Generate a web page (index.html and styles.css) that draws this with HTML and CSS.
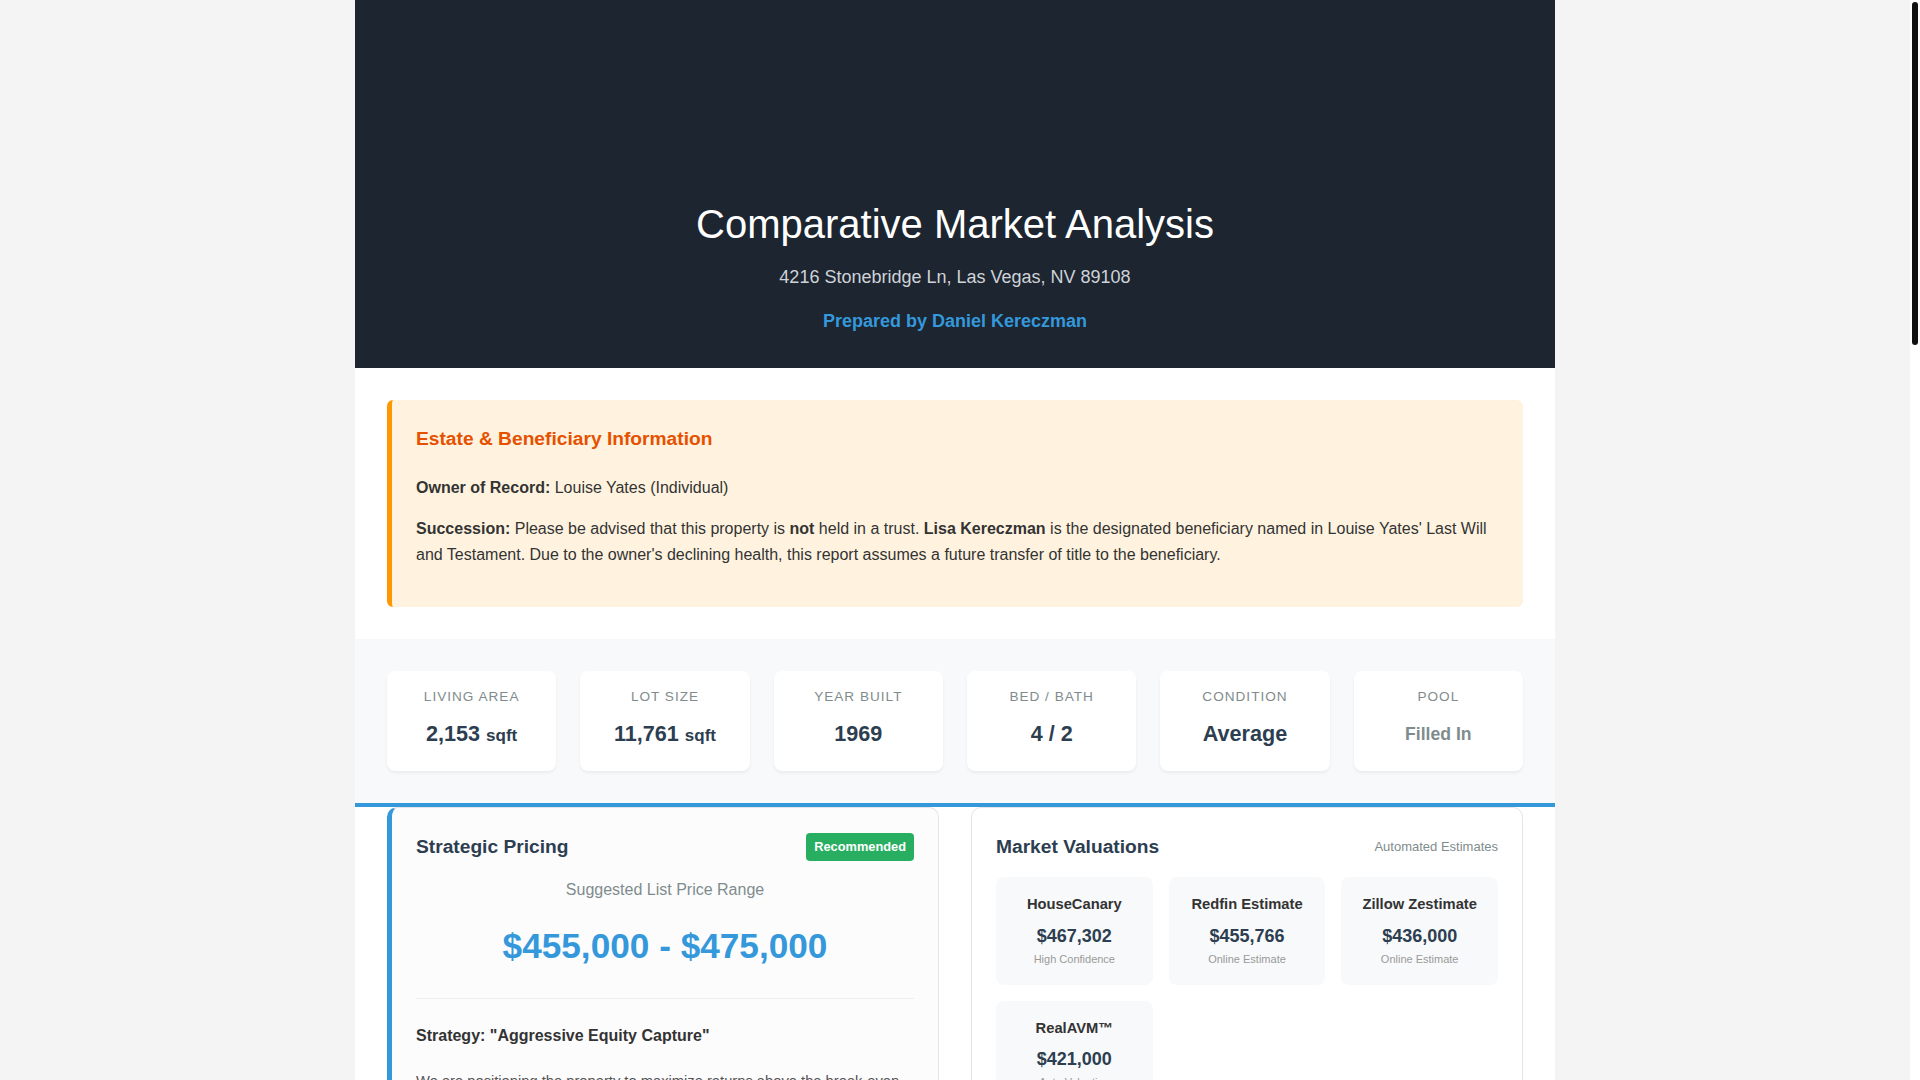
FILE: index.html
```html
<!DOCTYPE html>
<html lang="en">
<head>
<meta charset="utf-8">
<title>Comparative Market Analysis - 4216 Stonebridge Ln</title>
<link rel="stylesheet" href="styles.css">
</head>
<body>
<div class="scrollbar" aria-hidden="true"><div class="scrollbar-thumb"></div></div>
<div class="report">
  <header class="hero">
    <h1 class="hero-title">Comparative Market Analysis</h1>
    <p class="hero-address">4216 Stonebridge Ln, Las Vegas, NV 89108</p>
    <p class="hero-agent">Prepared by Daniel Kereczman</p>
  </header>

  <section class="section">
    <div class="estate-box">
      <h3 class="estate-title">Estate &amp; Beneficiary Information</h3>
      <p><strong>Owner of Record:</strong> Louise Yates (Individual)</p>
      <p><strong>Succession:</strong> Please be advised that this property is <strong>not</strong> held in a trust. <strong>Lisa Kereczman</strong> is the designated beneficiary named in Louise Yates' Last Will and Testament. Due to the owner's declining health, this report assumes a future transfer of title to the beneficiary.</p>
    </div>
  </section>

  <section class="stats">
    <div class="stat-card">
      <div class="stat-label">Living Area</div>
      <div class="stat-value">2,153 <span class="unit">sqft</span></div>
    </div>
    <div class="stat-card">
      <div class="stat-label">Lot Size</div>
      <div class="stat-value">11,761 <span class="unit">sqft</span></div>
    </div>
    <div class="stat-card">
      <div class="stat-label">Year Built</div>
      <div class="stat-value">1969</div>
    </div>
    <div class="stat-card">
      <div class="stat-label">Bed / Bath</div>
      <div class="stat-value">4 / 2</div>
    </div>
    <div class="stat-card">
      <div class="stat-label">Condition</div>
      <div class="stat-value">Average</div>
    </div>
    <div class="stat-card">
      <div class="stat-label">Pool</div>
      <div class="stat-value muted">Filled In</div>
    </div>
  </section>

  <section class="analysis">
    <div class="card pricing-card">
      <div class="card-header">
        <h3 class="card-title">Strategic Pricing</h3>
        <span class="badge">Recommended</span>
      </div>
      <div class="price-block">
        <div class="price-label">Suggested List Price Range</div>
        <div class="price-range">$455,000 - $475,000</div>
      </div>
      <h4 class="strategy-title">Strategy: "Aggressive Equity Capture"</h4>
      <p class="strategy-text">We are positioning the property to maximize returns above the break-even point while remaining competitive with recent closed sales in the Stonebridge area. The large 11,761 sqft lot and single-story layout appeal to buyers seeking space without HOA restrictions.</p>
      <ul class="strategy-list">
        <li>List at the upper end of the AVM range to leave room for negotiation.</li>
        <li>Highlight the oversized lot and RV parking potential.</li>
        <li>Disclose the filled-in pool with permits on file.</li>
        <li>Re-evaluate pricing after 21 days on market.</li>
      </ul>
      <p class="strategy-text">Should showing activity fall below expectations, a price adjustment toward $449,900 is recommended to capture buyers filtering at the $450,000 threshold.</p>
    </div>

    <div class="card">
      <div class="card-header">
        <h3 class="card-title">Market Valuations</h3>
        <span class="card-note">Automated Estimates</span>
      </div>
      <div class="avm-grid">
        <div class="avm-card">
          <div class="avm-name">HouseCanary</div>
          <div class="avm-value">$467,302</div>
          <div class="avm-sub">High Confidence</div>
        </div>
        <div class="avm-card">
          <div class="avm-name">Redfin Estimate</div>
          <div class="avm-value">$455,766</div>
          <div class="avm-sub">Online Estimate</div>
        </div>
        <div class="avm-card">
          <div class="avm-name">Zillow Zestimate</div>
          <div class="avm-value">$436,000</div>
          <div class="avm-sub">Online Estimate</div>
        </div>
        <div class="avm-card">
          <div class="avm-name">RealAVM™</div>
          <div class="avm-value">$421,000</div>
          <div class="avm-sub">Auto Valuation</div>
        </div>
      </div>
      <div class="avm-summary">
        <span>Average of Estimates</span>
        <strong>$445,017</strong>
      </div>
    </div>
  </section>

  <section class="section">
    <h2 class="section-title">Comparable Sales</h2>
    <table class="comps">
      <thead>
        <tr><th>Address</th><th>Sold Date</th><th>Sale Price</th><th>Sq Ft</th><th>$ / Sq Ft</th><th>Bed / Bath</th></tr>
      </thead>
      <tbody>
        <tr><td>4301 Rock Springs Dr</td><td>Aug 2024</td><td>$462,000</td><td>2,210</td><td>$209</td><td>4 / 2</td></tr>
        <tr><td>4125 Stonebridge Ln</td><td>Jul 2024</td><td>$449,500</td><td>2,080</td><td>$216</td><td>4 / 2</td></tr>
        <tr><td>6012 Alta Dr</td><td>Jun 2024</td><td>$471,000</td><td>2,290</td><td>$206</td><td>4 / 3</td></tr>
        <tr><td>4408 Kingsbury Ave</td><td>May 2024</td><td>$438,000</td><td>1,985</td><td>$221</td><td>3 / 2</td></tr>
        <tr><td>5920 Smoke Ranch Rd</td><td>Apr 2024</td><td>$455,000</td><td>2,140</td><td>$213</td><td>4 / 2</td></tr>
        <tr><td>4233 Coral Ridge Ct</td><td>Mar 2024</td><td>$444,900</td><td>2,050</td><td>$217</td><td>4 / 2</td></tr>
      </tbody>
    </table>
  </section>

  <section class="section section-alt">
    <h2 class="section-title">Estimated Net Proceeds</h2>
    <div class="proceeds">
      <div class="proceeds-row"><span>Projected Sale Price</span><strong>$465,000</strong></div>
      <div class="proceeds-row"><span>Commission (5%)</span><strong>-$23,250</strong></div>
      <div class="proceeds-row"><span>Title &amp; Escrow Fees</span><strong>-$3,900</strong></div>
      <div class="proceeds-row"><span>Transfer Tax</span><strong>-$2,372</strong></div>
      <div class="proceeds-row"><span>Repairs &amp; Preparation</span><strong>-$8,500</strong></div>
      <div class="proceeds-row total"><span>Estimated Net to Beneficiary</span><strong>$426,978</strong></div>
    </div>
  </section>

  <section class="section">
    <h2 class="section-title">Market Conditions</h2>
    <p class="body-text">The 89108 zip code continues to show balanced conditions with a median of 34 days on market. Inventory has risen modestly over the past quarter, giving buyers more choice, yet well-priced single-story homes on larger lots remain in demand.</p>
    <p class="body-text">Interest rate movements remain the primary factor influencing buyer affordability. Homes that are presented in clean, move-in condition are achieving 98 to 100 percent of list price, while properties requiring updates are trading closer to 95 percent.</p>
    <p class="body-text">Given the age of the home and its average condition, we recommend targeted improvements such as fresh interior paint, flooring in high-traffic areas, and landscaping cleanup to maximize first-impression appeal.</p>
  </section>

  <section class="section section-alt">
    <h2 class="section-title">Next Steps</h2>
    <ol class="steps">
      <li>Confirm probate or transfer-on-death requirements with the estate attorney.</li>
      <li>Schedule a pre-listing inspection to identify any major repairs.</li>
      <li>Complete recommended preparation and professional photography.</li>
      <li>Launch the listing with a coordinated marketing plan and open house.</li>
      <li>Review offers with the beneficiary and negotiate the best terms.</li>
    </ol>
  </section>

  <footer class="report-footer">
    <p>This analysis is not an appraisal and should not be relied upon as such. Values are estimates based on available market data.</p>
    <p>Daniel Kereczman &middot; Las Vegas, NV</p>
  </footer>
</div>
</body>
</html>
```

FILE: styles.css
```css
* {
  box-sizing: border-box;
}

html {
  background: #f4f4f4;
}

body {
  margin: 0;
  padding-right: 10px;
  background: #f4f4f4;
  font-family: "Liberation Sans", Arial, Helvetica, sans-serif;
  color: #333;
  line-height: 1.6;
}

/* Window scrollbar overlay */
.scrollbar {
  position: fixed;
  top: 0;
  right: 0;
  width: 10px;
  height: 100vh;
  background: #ffffff;
  padding: 2px;
  z-index: 10;
}

.scrollbar-thumb {
  width: 6px;
  height: 343px;
  background: #111111;
  border-radius: 3px;
}

.report {
  width: 1200px;
  margin: 0 auto;
  background: #ffffff;
}

/* Header */
.hero {
  background: #1c2530;
  color: #ffffff;
  text-align: center;
  padding: 200px 32px 32.4px;
}

.hero-title {
  margin: 0 0 14.8px;
  font-size: 40px;
  font-weight: 400;
  line-height: 48px;
}

.hero-address {
  margin: 0 0 15px;
  font-size: 18px;
  color: #cfd3d8;
}

.hero-agent {
  margin: 0;
  font-size: 18px;
  font-weight: 700;
  color: #3498db;
}

/* Sections */
.section {
  padding: 32px;
}

.section-alt {
  background: #f8f9fa;
}

.estate-box {
  background: #fff3e0;
  border-left: 5px solid #ff9800;
  border-radius: 6px;
  padding: 24px;
  font-size: 16px;
  color: #333;
}

.estate-title {
  margin: 0 0 20px;
  font-size: 19.2px;
  color: #e65100;
}

.estate-box p {
  margin: 0 0 16px;
}

/* Stats */
.stats {
  display: grid;
  grid-template-columns: repeat(6, 1fr);
  gap: 24px;
  padding: 32px;
  background: #f8f9fa;
  border-bottom: 4px solid #3498db;
}

.stat-card {
  background: #ffffff;
  border-radius: 8px;
  padding: 15px 12px 17px;
  text-align: center;
  box-shadow: 0 2px 3px rgba(0, 0, 0, 0.06);
}

.stat-label {
  margin-bottom: 9px;
  font-size: 13.6px;
  letter-spacing: 1px;
  text-transform: uppercase;
  color: #7f8c8d;
}

.stat-value {
  font-size: 21.6px;
  line-height: 34.56px;
  font-weight: 700;
  color: #2c3e50;
}

.stat-value .unit {
  font-size: 17px;
}

.stat-value.muted {
  font-size: 17.6px;
  color: #7f8c8d;
}

/* Analysis cards */
.analysis {
  display: grid;
  grid-template-columns: 1fr 1fr;
  gap: 32px;
  padding: 0 32px 32px;
  align-items: start;
}

.card {
  background: #ffffff;
  border: 1px solid #e1e4e8;
  border-radius: 10px;
  padding: 24px;
}

.pricing-card {
  background: #fcfcfd;
  border-left: 5px solid #3498db;
}

.card-header {
  display: flex;
  align-items: center;
  justify-content: space-between;
  margin-bottom: 15px;
}

.card-title {
  margin: 0;
  font-size: 19.2px;
  font-weight: 700;
  color: #2c3e50;
}

.badge {
  padding: 4px 8px;
  border-radius: 4px;
  background: #27ae60;
  color: #ffffff;
  font-size: 12.8px;
  font-weight: 700;
}

.card-note {
  font-size: 13px;
  color: #7f8c8d;
}

.price-block {
  text-align: center;
  padding-bottom: 24px;
  border-bottom: 1px solid #eceeef;
  margin-bottom: 23.5px;
}

.price-label {
  font-size: 16px;
  color: #7f8c8d;
}

.price-range {
  margin-top: 15px;
  font-size: 35.2px;
  font-weight: 700;
  color: #3498db;
}

.strategy-title {
  margin: 0 0 22px;
  font-size: 16px;
  color: #333;
}

.strategy-text {
  margin: 0 0 16px;
  font-size: 14.72px;
  color: #555;
}

.strategy-list {
  margin: 0 0 16px;
  padding-left: 20px;
  font-size: 14.72px;
  color: #555;
}

.avm-grid {
  display: grid;
  grid-template-columns: repeat(3, 1fr);
  gap: 16px;
}

.avm-card {
  background: #f8f9fa;
  border-radius: 8px;
  padding: 16px 12px 16.6px;
  text-align: center;
}

.avm-name {
  margin-bottom: 5px;
  font-size: 14.72px;
  font-weight: 700;
  color: #333;
}

.avm-value {
  font-size: 18px;
  font-weight: 700;
  color: #2c3e50;
}

.avm-sub {
  font-size: 11px;
  color: #999;
}

.avm-summary {
  display: flex;
  justify-content: space-between;
  margin-top: 20px;
  padding-top: 16px;
  border-top: 1px solid #eceeef;
  font-size: 15px;
  color: #555;
}

.avm-summary strong {
  color: #2c3e50;
}

/* Lower sections */
.section-title {
  margin: 0 0 20px;
  font-size: 22px;
  color: #2c3e50;
}

.comps {
  width: 100%;
  border-collapse: collapse;
  font-size: 15px;
}

.comps th {
  text-align: left;
  padding: 12px 14px;
  background: #2c3e50;
  color: #ffffff;
  font-weight: 700;
}

.comps td {
  padding: 12px 14px;
  border-bottom: 1px solid #eceeef;
  color: #444;
}

.proceeds {
  background: #ffffff;
  border-radius: 8px;
  padding: 16px 24px;
}

.proceeds-row {
  display: flex;
  justify-content: space-between;
  padding: 10px 0;
  border-bottom: 1px solid #eceeef;
  font-size: 16px;
}

.proceeds-row.total {
  border-bottom: none;
  font-size: 18px;
  color: #27ae60;
}

.body-text {
  margin: 0 0 16px;
  font-size: 16px;
  color: #555;
}

.steps {
  margin: 0;
  padding-left: 22px;
  font-size: 16px;
  color: #444;
}

.steps li {
  margin-bottom: 10px;
}

.report-footer {
  padding: 40px 32px 120px;
  background: #1c2530;
  color: #bdc3c7;
  text-align: center;
  font-size: 14px;
}

.report-footer p {
  margin: 0 0 8px;
}
```
